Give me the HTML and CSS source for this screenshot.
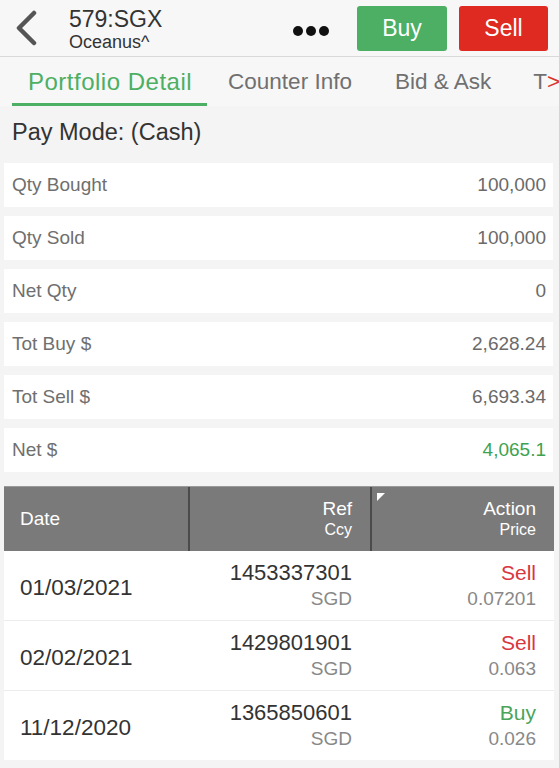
FILE: index.html
```html
<!DOCTYPE html>
<html lang="en">

<head>
    <meta charset="UTF-8">
    <meta name="viewport" content="width=device-width, initial-scale=1.0">
    <title>579:SGX Portfolio</title>
    <link rel="stylesheet" href="styles.css">
</head>

<body>
    <div class="topbar">
        <svg class="back" width="24" height="36" viewBox="0 0 24 36">
            <path d="M20 3 L5 18 L20 33" fill="none" stroke="#555" stroke-width="4.5" stroke-linecap="round"
                stroke-linejoin="round" />
        </svg>
        <div class="stock">
            <div class="code">579:SGX</div>
            <div class="name">Oceanus^</div>
        </div>
        <div class="more"><span></span><span></span><span></span></div>
        <button class="btn buy">Buy</button>
        <button class="btn sell">Sell</button>
    </div>

    <div class="tabs">
        <div class="tab active">Portfolio Detail</div>
        <div class="tab">Counter Info</div>
        <div class="tab">Bid &amp; Ask</div>
        <div class="tab last">T<span class="arrow">&gt;</span></div>
    </div>

    <div class="pay-mode">Pay Mode: (Cash)</div>

    <div class="summary">
        <div class="row"><span class="label">Qty Bought</span><span class="value">100,000</span></div>
        <div class="row"><span class="label">Qty Sold</span><span class="value">100,000</span></div>
        <div class="row"><span class="label">Net Qty</span><span class="value">0</span></div>
        <div class="row"><span class="label">Tot Buy $</span><span class="value">2,628.24</span></div>
        <div class="row"><span class="label">Tot Sell $</span><span class="value">6,693.34</span></div>
        <div class="row"><span class="label">Net $</span><span class="value up">4,065.1</span></div>
    </div>

    <div class="trades">
        <div class="trades-head">
            <div class="cell date">Date</div>
            <div class="cell ref">
                <div class="top">Ref</div>
                <div class="sub">Ccy</div>
            </div>
            <div class="cell action">
                <span class="corner"></span>
                <div class="top">Action</div>
                <div class="sub">Price</div>
            </div>
        </div>

        <div class="trade">
            <div class="cell date">01/03/2021</div>
            <div class="cell ref">
                <div class="top">1453337301</div>
                <div class="sub">SGD</div>
            </div>
            <div class="cell action">
                <div class="top sell-text">Sell</div>
                <div class="sub">0.07201</div>
            </div>
        </div>
        <div class="trade">
            <div class="cell date">02/02/2021</div>
            <div class="cell ref">
                <div class="top">1429801901</div>
                <div class="sub">SGD</div>
            </div>
            <div class="cell action">
                <div class="top sell-text">Sell</div>
                <div class="sub">0.063</div>
            </div>
        </div>
        <div class="trade">
            <div class="cell date">11/12/2020</div>
            <div class="cell ref">
                <div class="top">1365850601</div>
                <div class="sub">SGD</div>
            </div>
            <div class="cell action">
                <div class="top buy-text">Buy</div>
                <div class="sub">0.026</div>
            </div>
        </div>
    </div>
</body>

</html>
```

FILE: styles.css
```css
body {
    margin: 0;
    padding: 0;
    font-family: Arial, "Liberation Sans", Helvetica, sans-serif;
    background: #f4f4f4;
    color: #333;
}

/* top bar */
.topbar {
    height: 56px;
    display: flex;
    align-items: center;
    background: #f7f7f7;
    border-bottom: 1px solid #d9d9d9;
}

.back {
    margin-left: 14px;
    flex-shrink: 0;
}

.stock {
    margin-left: 31px;
    width: 210px;
    padding-top: 2px;
}

.code {
    font-size: 23px;
    line-height: 25px;
    color: #333;
}

.name {
    font-size: 18px;
    line-height: 20px;
    color: #333;
}

.more {
    display: flex;
    gap: 3px;
    margin-left: 14px;
    margin-top: 6px;
}

.more span {
    width: 10px;
    height: 10px;
    border-radius: 50%;
    background: #111;
}

.btn {
    width: 90px;
    height: 45px;
    border: none;
    border-radius: 3px;
    color: #fff;
    font-family: inherit;
    font-size: 23px;
    padding: 0;
}

.buy {
    margin-left: 28px;
    background: #4caf63;
}

.sell {
    margin-left: 12px;
    width: 89px;
    background: #de2a20;
}

/* tabs */
.tabs {
    height: 49px;
    display: flex;
    background: #f7f7f7;
    white-space: nowrap;
    overflow: hidden;
}

.tab {
    font-size: 22.5px;
    line-height: 49px;
    color: #707070;
    margin-left: 36px;
}

.tab.active {
    margin-left: 12px;
    padding: 0 15px 0 16px;
    font-size: 24px;
    letter-spacing: 0.5px;
    color: #4caf63;
    height: 46px;
    line-height: 50px;
    border-bottom: 3px solid #4caf63;
}

.tab:nth-child(2) {
    margin-left: 21px;
}

.tab:nth-child(3) {
    margin-left: 43px;
}

.tab.last {
    margin-left: 42px;
}

.arrow {
    color: #d9352d;
}

/* pay mode */
.pay-mode {
    font-size: 23.5px;
    padding: 13px 12px 18px;
    line-height: 26px;
    color: #333;
}

/* summary rows */
.summary {
    display: flex;
    flex-direction: column;
    gap: 9px;
    margin: 0 6px 0 4px;
}

.row {
    height: 44px;
    display: flex;
    align-items: center;
    justify-content: space-between;
    padding: 0 7px 0 8px;
    background: #fff;
    font-size: 19px;
}

.label {
    color: #6f6f6f;
}

.value {
    color: #6a6a6a;
}

.value.up {
    color: #3da24f;
}

/* trades table */
.trades {
    margin: 14px 5px 0 4px;
}

.trades-head,
.trade {
    display: grid;
    grid-template-columns: 186px 182px 1fr;
}

.trades-head {
    height: 64px;
    background: #7a7a7a;
    color: #fff;
    border-top: 1px solid #9a9a9a;
}

.trades-head .cell {
    display: flex;
    flex-direction: column;
    justify-content: center;
    position: relative;
}

.trades-head .cell.date,
.trades-head .cell.ref {
    border-right: 2px solid #4b4b4b;
}

.trades-head .date {
    font-size: 19px;
    padding-left: 16px;
}

.trades-head .ref,
.trades-head .action {
    align-items: flex-end;
    padding-right: 18px;
}

.trades-head .top {
    font-size: 19px;
    line-height: 22px;
}

.trades-head .sub {
    font-size: 16px;
    line-height: 20px;
}

.corner {
    position: absolute;
    left: 5px;
    top: 6px;
    width: 0;
    height: 0;
    border-top: 8px solid #fff;
    border-right: 8px solid transparent;
}

.trade {
    height: 69px;
    background: #fff;
    border-bottom: 1px solid #ececec;
}

.trade:last-child {
    border-bottom: none;
}

.trade .cell {
    display: flex;
    flex-direction: column;
    justify-content: center;
}

.trade .date {
    font-size: 22.5px;
    padding-left: 16px;
    padding-top: 4px;
    color: #333;
}

.trade .ref,
.trade .action {
    align-items: flex-end;
    padding-right: 20px;
}

.trade .action {
    padding-right: 18px;
}

.trade .top {
    font-size: 22px;
    line-height: 26px;
    color: #333;
}

.trade .action .top {
    font-size: 21px;
}

.trade .sub {
    font-size: 19px;
    line-height: 26px;
    color: #888;
}

.sell-text {
    color: #d9363e !important;
}

.buy-text {
    color: #4aa45a !important;
}
```
